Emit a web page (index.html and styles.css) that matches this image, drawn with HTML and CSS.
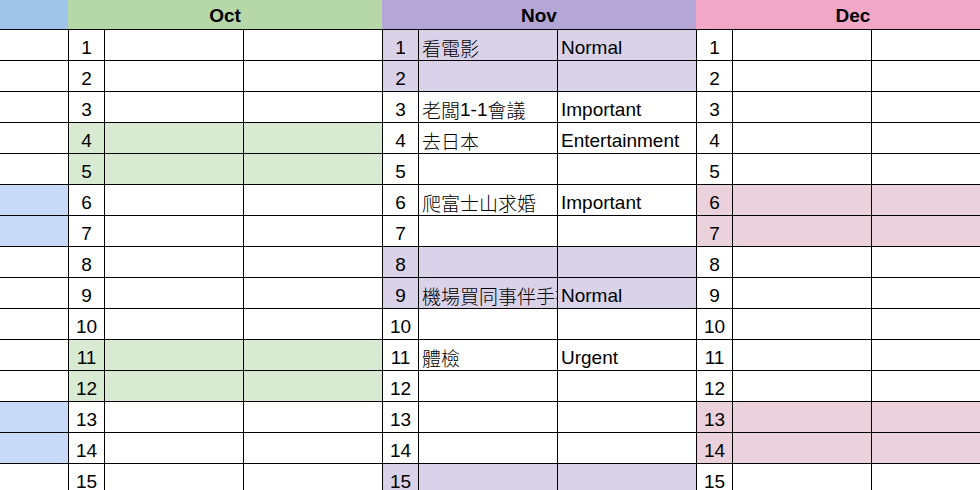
FILE: index.html
```html
<!DOCTYPE html>
<html lang="zh-Hant">
<head>
<meta charset="utf-8">
<title>Calendar sheet</title>
<link rel="stylesheet" href="styles.css">
</head>
<body>
<div class="sheet">
  <div class="head">
    <div class="h h-sep"></div>
    <div class="h h-oct">Oct</div>
    <div class="h h-nov">Nov</div>
    <div class="h h-dec">Dec</div>
  </div>
  <div class="rows">
    <div class="row nov">
      <div class="c"></div>
      <div class="c n">1</div><div class="c"></div><div class="c"></div>
      <div class="c n">1</div><div class="c t"><span class="zh">看電影</span></div><div class="c t">Normal</div>
      <div class="c n">1</div><div class="c"></div><div class="c"></div>
    </div>
    <div class="row nov">
      <div class="c"></div>
      <div class="c n">2</div><div class="c"></div><div class="c"></div>
      <div class="c n">2</div><div class="c t"></div><div class="c t"></div>
      <div class="c n">2</div><div class="c"></div><div class="c"></div>
    </div>
    <div class="row">
      <div class="c"></div>
      <div class="c n">3</div><div class="c"></div><div class="c"></div>
      <div class="c n">3</div><div class="c t"><span class="zh">老闆</span>1-1<span class="zh">會議</span></div><div class="c t">Important</div>
      <div class="c n">3</div><div class="c"></div><div class="c"></div>
    </div>
    <div class="row oct">
      <div class="c"></div>
      <div class="c n">4</div><div class="c"></div><div class="c"></div>
      <div class="c n">4</div><div class="c t"><span class="zh">去日本</span></div><div class="c t">Entertainment</div>
      <div class="c n">4</div><div class="c"></div><div class="c"></div>
    </div>
    <div class="row oct">
      <div class="c"></div>
      <div class="c n">5</div><div class="c"></div><div class="c"></div>
      <div class="c n">5</div><div class="c t"></div><div class="c t"></div>
      <div class="c n">5</div><div class="c"></div><div class="c"></div>
    </div>
    <div class="row sep dec">
      <div class="c"></div>
      <div class="c n">6</div><div class="c"></div><div class="c"></div>
      <div class="c n">6</div><div class="c t"><span class="zh">爬富士山求婚</span></div><div class="c t">Important</div>
      <div class="c n">6</div><div class="c"></div><div class="c"></div>
    </div>
    <div class="row sep dec">
      <div class="c"></div>
      <div class="c n">7</div><div class="c"></div><div class="c"></div>
      <div class="c n">7</div><div class="c t"></div><div class="c t"></div>
      <div class="c n">7</div><div class="c"></div><div class="c"></div>
    </div>
    <div class="row nov">
      <div class="c"></div>
      <div class="c n">8</div><div class="c"></div><div class="c"></div>
      <div class="c n">8</div><div class="c t"></div><div class="c t"></div>
      <div class="c n">8</div><div class="c"></div><div class="c"></div>
    </div>
    <div class="row nov">
      <div class="c"></div>
      <div class="c n">9</div><div class="c"></div><div class="c"></div>
      <div class="c n">9</div><div class="c t"><span class="zh">機場買同事伴手禮</span></div><div class="c t">Normal</div>
      <div class="c n">9</div><div class="c"></div><div class="c"></div>
    </div>
    <div class="row">
      <div class="c"></div>
      <div class="c n">10</div><div class="c"></div><div class="c"></div>
      <div class="c n">10</div><div class="c t"></div><div class="c t"></div>
      <div class="c n">10</div><div class="c"></div><div class="c"></div>
    </div>
    <div class="row oct">
      <div class="c"></div>
      <div class="c n">11</div><div class="c"></div><div class="c"></div>
      <div class="c n">11</div><div class="c t"><span class="zh">體檢</span></div><div class="c t">Urgent</div>
      <div class="c n">11</div><div class="c"></div><div class="c"></div>
    </div>
    <div class="row oct">
      <div class="c"></div>
      <div class="c n">12</div><div class="c"></div><div class="c"></div>
      <div class="c n">12</div><div class="c t"></div><div class="c t"></div>
      <div class="c n">12</div><div class="c"></div><div class="c"></div>
    </div>
    <div class="row sep dec">
      <div class="c"></div>
      <div class="c n">13</div><div class="c"></div><div class="c"></div>
      <div class="c n">13</div><div class="c t"></div><div class="c t"></div>
      <div class="c n">13</div><div class="c"></div><div class="c"></div>
    </div>
    <div class="row sep dec">
      <div class="c"></div>
      <div class="c n">14</div><div class="c"></div><div class="c"></div>
      <div class="c n">14</div><div class="c t"></div><div class="c t"></div>
      <div class="c n">14</div><div class="c"></div><div class="c"></div>
    </div>
    <div class="row nov">
      <div class="c"></div>
      <div class="c n">15</div><div class="c"></div><div class="c"></div>
      <div class="c n">15</div><div class="c t"></div><div class="c t"></div>
      <div class="c n">15</div><div class="c"></div><div class="c"></div>
    </div>
  </div>
</div>
</body>
</html>
```
FILE: styles.css
```css
html, body {
  margin: 0;
  padding: 0;
  background: #fff;
}

body {
  font-family: "Liberation Sans", Arial, "Noto Sans CJK TC", sans-serif;
  font-size: 19px;
  color: #000;
}

.sheet {
  width: 980px;
  height: 490px;
  overflow: hidden;
}

.head {
  display: flex;
  height: 29px;
  border-bottom: 1px solid #000;
  width: 1010px;
}

.h {
  flex: none;
  display: flex;
  align-items: flex-end;
  justify-content: center;
  font-weight: bold;
  line-height: 22px;
  padding-bottom: 2px;
  box-sizing: border-box;
}

.h-sep { width: 68px; background: #9fc5e8; }
.h-oct { width: 314px; background: #b6d7a8; }
.h-nov { width: 314px; background: #b4a7d6; }
.h-dec { width: 314px; background: #f1a7c6; }

.rows {
  display: grid;
  gap: 1px;
  background: #000;
  width: 1010px;
}

.row {
  display: grid;
  grid-template-columns: 68px 35px 138px 138px 35px 138px 138px 35px 138px 138px;
  grid-template-rows: 30px;
  gap: 1px;
}

.c {
  background: #fff;
  display: flex;
  align-items: flex-end;
  line-height: 22px;
  padding-bottom: 1px;
  box-sizing: border-box;
  white-space: nowrap;
  overflow: hidden;
  min-width: 0;
}

.n {
  justify-content: center;
}

.t {
  padding-left: 3px;
}

.zh {
  font-family: "Noto Sans CJK TC", sans-serif;
  font-weight: 300;
  vertical-align: 1px;
}

.row.sep .c:nth-child(1) { background: #c9daf8; }
.row.oct .c:nth-child(n+2):nth-child(-n+4) { background: #d9ead3; }
.row.nov .c:nth-child(n+5):nth-child(-n+7) { background: #d9d2e9; }
.row.dec .c:nth-child(n+8):nth-child(-n+10) { background: #ead1dc; }
```
